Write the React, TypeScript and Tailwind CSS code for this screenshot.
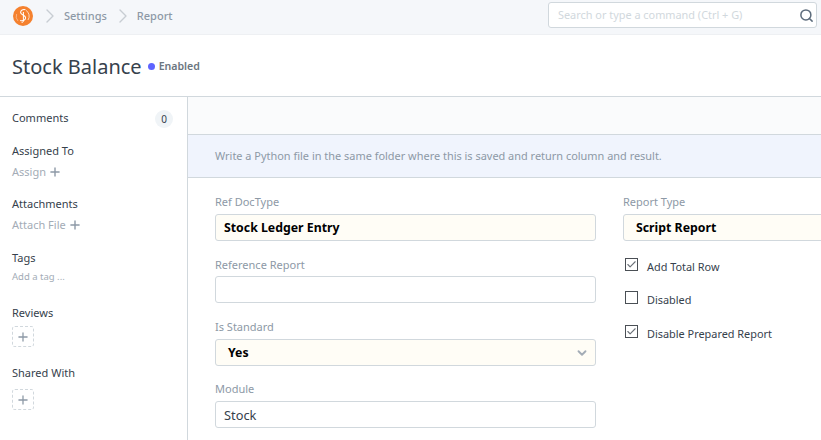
import { Search, Plus, ChevronRight, ChevronDown, Check } from "lucide-react";

const font = { fontFamily: '"Noto Sans", "Open Sans", sans-serif' };

function Logo() {
  return (
    <svg width="20" height="20" viewBox="0 0 20 20" className="shrink-0">
      <circle cx="10" cy="10" r="10" fill="#f5812e" />
      <path d="M13 4.4a6.8 6.8 0 0 1 2 9.6" fill="none" stroke="#fde3cf" strokeWidth="0.9" />
      <path d="M5 15a6.8 6.8 0 0 1-1.4-7" fill="none" stroke="#fbc9a3" strokeWidth="0.7" />
      <path d="M12.5 3.8C10 3 7.6 4.2 7.6 6.4c0 2.6 5 2.6 5 5.4 0 2.2-2.6 3.6-5.4 2.6" fill="none" stroke="#fff" strokeWidth="1.1" />
      <path d="M10.4 6v8.8c0 1.2-.8 1.8-1.8 1.6" fill="none" stroke="#fff" strokeWidth="1" />
    </svg>
  );
}

function SideLabel({ children }: { children: string }) {
  return <p className="text-[11px] leading-[14px] text-[#36414c]">{children}</p>;
}

function SideAction({ text }: { text: string }) {
  return (
    <div className="mt-[7px] flex h-[14px] items-center gap-[2px] text-[11px] leading-[14px] text-[#a3acb6]">
      {text}
      <Plus size={14} strokeWidth={2.4} className="text-[#8d99a6]" />
    </div>
  );
}

function DashedAdd({ className }: { className: string }) {
  return (
    <div className={`flex h-[21px] w-[22px] items-center justify-center rounded-[3px] border border-dashed border-[#d1d8dd] ${className}`}>
      <Plus size={14} strokeWidth={2.2} className="text-[#8d99a6]" />
    </div>
  );
}

function Field({
  label,
  value,
  bold,
  select,
}: {
  label: string;
  value?: string;
  bold?: boolean;
  select?: boolean;
}) {
  return (
    <div>
      <p className="mb-[3.55px] h-[16px] text-[11px] leading-[16px] text-[#8d99a6]">{label}</p>
      <div
        className={`flex h-[27px] items-center justify-between rounded-[3px] border border-[#d1d8dd] pt-[2px] ${
          bold ? "bg-[#fffdf6] text-[12.3px] font-bold text-black" : "bg-white text-[12.8px] text-[#36414c]"
        } ${select ? "pl-[12px] pr-[6px]" : "px-[8px]"}`}
      >
        <span>{value}</span>
        {select && <ChevronDown size={14} strokeWidth={3.2} className="text-[#a3acb6]" />}
      </div>
    </div>
  );
}

function CheckRow({ label, checked }: { label: string; checked?: boolean }) {
  return (
    <div className="flex h-[16px] items-start gap-[9px] text-[10.9px] leading-[14px] text-[#36414c]">
      <span className="flex h-[13px] w-[13px] items-center justify-center border border-[#4a4f55] bg-white">
        {checked && <Check size={13} strokeWidth={2.4} className="text-[#6b7178]" />}
      </span>
      <span className="mt-[2px]">{label}</span>
    </div>
  );
}

export default function App() {
  return (
    <div style={font} className="flex h-[440px] w-[821px] flex-col overflow-hidden bg-white">
      <header className="flex h-[35px] shrink-0 items-center border-b border-[#eef0f3] bg-[#f5f7fa] pb-[2px] pl-[13px] pr-[4px]">
        <Logo />
        <ChevronRight size={24} strokeWidth={1.4} className="ml-[5px] text-[#c8cdd3]" />
        <span className="ml-[2px] text-[11px] font-medium text-[#8d99a6]">Settings</span>
        <ChevronRight size={24} strokeWidth={1.4} className="ml-[4.5px] text-[#c8cdd3]" />
        <span className="ml-[1.5px] text-[11px] font-medium text-[#8d99a6]">Report</span>
        <div className="mb-[3px] ml-auto flex h-[26px] w-[269px] items-center justify-between rounded-[3px] border border-[#d1d8dd] bg-white pl-[9px] pr-[2px] pt-[1px] text-[10.9px] text-[#d1d8dd]">
          Search or type a command (Ctrl + G)
          <Search size={15} strokeWidth={2.4} className="text-[#5d6c7c]" />
        </div>
      </header>

      <div className="flex h-[62px] shrink-0 items-center border-b border-[#d1d8dd] pl-[12px] pt-[2px]">
        <h1 className="text-[20px] leading-[26px] text-[#36414c]">Stock Balance</h1>
        <span className="ml-[6px] h-[7px] w-[7px] rounded-full bg-[#5e64ff]" />
        <span className="ml-[4px] text-[10.6px] font-semibold text-[#6c7680]">Enabled</span>
      </div>

      <div className="flex min-h-0 flex-1">
        <aside className="w-[188px] shrink-0 border-r border-[#d1d8dd] pl-[12px] pr-[14px] pt-[14px]">
          <div className="flex h-[14px] items-center justify-between">
            <SideLabel>Comments</SideLabel>
            <span className="flex h-[18px] w-[18px] translate-y-[1px] items-center justify-center rounded-full bg-[#f0f4f7] text-[10px] text-[#36414c]">
              0
            </span>
          </div>
          <div className="mt-[19px]">
            <SideLabel>Assigned To</SideLabel>
            <SideAction text="Assign" />
          </div>
          <div className="mt-[18px]">
            <SideLabel>Attachments</SideLabel>
            <SideAction text="Attach File" />
          </div>
          <div className="mt-[19px]">
            <SideLabel>Tags</SideLabel>
            <p className="mt-[5px] text-[9.5px] leading-[14px] text-[#a3acb6]">Add a tag ...</p>
          </div>
          <div className="mt-[22px]">
            <SideLabel>Reviews</SideLabel>
            <DashedAdd className="mt-[6px]" />
          </div>
          <div className="mt-[19px]">
            <SideLabel>Shared With</SideLabel>
            <DashedAdd className="mt-[9px]" />
          </div>
        </aside>

        <main className="min-w-0 flex-1">
          <div className="h-[38px] border-b border-[#d1d8dd] bg-[#fafbfc]" />
          <div className="flex h-[43px] items-center border-b border-[#d1d8dd] bg-[#f0f4fd] pl-[27px] text-[10.95px] text-[#8d99a6]">
            Write a Python file in the same folder where this is saved and return column and result.
          </div>
          <div className="flex gap-[27px] pl-[27px] pt-[16.45px]">
            <div className="flex w-[381px] shrink-0 flex-col gap-[15.8px]">
              <Field label="Ref DocType" value="Stock Ledger Entry" bold />
              <Field label="Reference Report" />
              <Field label="Is Standard" value="Yes" bold select />
              <Field label="Module" value="Stock" />
            </div>
            <div className="w-[381px] shrink-0">
              <Field label="Report Type" value="Script Report" bold select />
              <div className="mt-[17px] flex flex-col gap-[17.3px] pl-[2px]">
                <CheckRow label="Add Total Row" checked />
                <CheckRow label="Disabled" />
                <CheckRow label="Disable Prepared Report" checked />
              </div>
            </div>
          </div>
        </main>
      </div>
    </div>
  );
}
